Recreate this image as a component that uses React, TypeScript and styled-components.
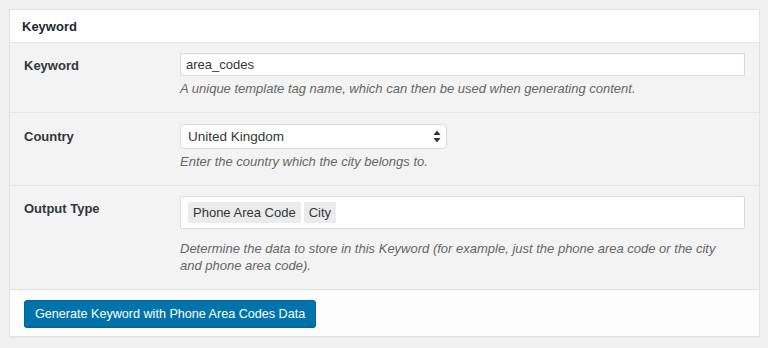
import React, { useState } from 'react';
import styled, { createGlobalStyle } from 'styled-components';

const GlobalStyle = createGlobalStyle`
  html, body {
    margin: 0;
    padding: 0;
    background: #f1f1f1;
  }
  body {
    font-family: "Liberation Sans", Arial, sans-serif;
    font-size: 13px;
    color: #23282d;
  }
`;

const App = () => {
  const [keyword, setKeyword] = useState('area_codes');
  const [country, setCountry] = useState('United Kingdom');
  const outputTypes = ['Phone Area Code', 'City'];

  return (
    <Page>
      <GlobalStyle />
      <Panel>
        <PanelHeader>Keyword</PanelHeader>

        <Row top={10}>
          <Label>Keyword</Label>
          <Field>
            <TextInput value={keyword} onChange={(e) => setKeyword(e.target.value)} />
            <Description gap={4}>
              A unique template tag name, which can then be used when generating content.
            </Description>
          </Field>
        </Row>

        <Row top={11}>
          <Label>Country</Label>
          <Field>
            <SelectWrap>
              <Select value={country} onChange={(e) => setCountry(e.target.value)}>
                <option value="United Kingdom">United Kingdom</option>
                <option value="United States">United States</option>
              </Select>
              <SelectArrows width="8" height="13" viewBox="0 0 8 13">
                <path d="M4 0.5 L7.5 5 L0.5 5 Z" fill="#333" />
                <path d="M4 12.5 L7.5 8 L0.5 8 Z" fill="#333" />
              </SelectArrows>
            </SelectWrap>
            <Description gap={4}>Enter the country which the city belongs to.</Description>
          </Field>
        </Row>

        <Row top={10}>
          <Label>Output Type</Label>
          <Field>
            <TagBox>
              {outputTypes.map((t) => (
                <Tag key={t}>{t}</Tag>
              ))}
            </TagBox>
            <Description gap={11}>
              Determine the data to store in this Keyword (for example, just the phone area code or the city
              and phone area code).
            </Description>
          </Field>
        </Row>

        <Footer>
          <PrimaryButton>Generate Keyword with Phone Area Codes Data</PrimaryButton>
        </Footer>
      </Panel>
    </Page>
  );
};

const Page = styled.div`
  padding: 9px 8px 11px 9px;
`;

const Panel = styled.div`
  width: 749px;
  border: 1px solid #e2e2e2;
  background: #f3f3f3;
  box-shadow: 0 1px 1px rgba(0, 0, 0, 0.03);
`;

const PanelHeader = styled.div`
  height: 32px;
  line-height: 33px;
  padding-left: 12px;
  background: #fff;
  font-weight: 700;
  font-size: 13px;
  color: #23282d;
`;

const Row = styled.div<{ top: number }>`
  display: flex;
  padding: ${(p) => p.top}px 14px 15px 14px;
  border-top: 1px solid #e6e6e6;
`;

const Label = styled.div`
  width: 156px;
  flex-shrink: 0;
  padding-top: 1px;
  line-height: 24px;
  font-weight: 700;
  color: #32373c;
`;

const Field = styled.div`
  flex: 1;
  display: flex;
  flex-direction: column;
`;

const TextInput = styled.input`
  box-sizing: border-box;
  width: 565px;
  height: 23px;
  padding: 0 5px;
  border: 1px solid #dcdcdc;
  background: #fff;
  box-shadow: inset 0 1px 2px rgba(0, 0, 0, 0.04);
  font-family: inherit;
  font-size: 13px;
  color: #32373c;
  outline: none;
`;

const SelectWrap = styled.div`
  position: relative;
  width: 267px;
`;

const Select = styled.select`
  box-sizing: border-box;
  width: 267px;
  height: 25px;
  padding: 0 20px 0 7px;
  border: 1px solid #dadada;
  border-radius: 4px;
  background: #fff;
  appearance: none;
  font-family: inherit;
  font-size: 13.5px;
  color: #32373c;
  outline: none;
`;

const SelectArrows = styled.svg`
  position: absolute;
  right: 6px;
  top: 6px;
  pointer-events: none;
`;

const TagBox = styled.div`
  box-sizing: border-box;
  width: 565px;
  height: 33px;
  display: flex;
  align-items: center;
  gap: 3px;
  padding: 0 7px;
  border: 1px solid #dcdcdc;
  border-radius: 2px;
  background: #fff;
`;

const Tag = styled.span`
  height: 21px;
  line-height: 21px;
  padding: 0 5px;
  background: #ebebeb;
  font-size: 13px;
  color: #32373c;
`;

const Description = styled.p<{ gap: number }>`
  margin: ${(p) => p.gap}px 0 0 0;
  width: 560px;
  font-style: italic;
  font-size: 13px;
  line-height: 17px;
  color: #666;
`;

const Footer = styled.div`
  padding: 10px 14px 9px 14px;
  border-top: 1px solid #e2e2e2;
  background: #fdfdfd;
`;

const PrimaryButton = styled.button`
  height: 27px;
  padding: 0 10px;
  border: 1px solid #006799;
  border-radius: 3px;
  background: #0073aa;
  box-shadow: 0 1px 0 #006799;
  color: #fff;
  font-family: inherit;
  font-size: 12.6px;
  cursor: pointer;
`;

export default App;
